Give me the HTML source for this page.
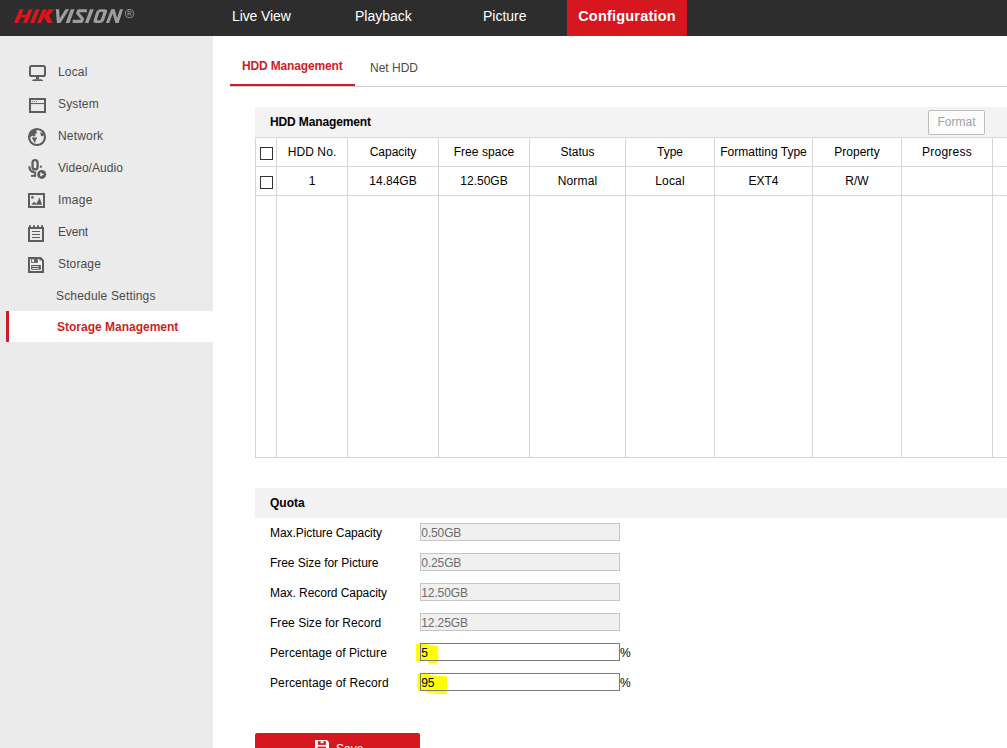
<!DOCTYPE html>
<html><head><meta charset="utf-8">
<style>
*{box-sizing:border-box;margin:0;padding:0}
html,body{width:1007px;height:748px;overflow:hidden;background:#fff;font-family:"Liberation Sans",sans-serif;font-size:12px;color:#000}
.abs{position:absolute}
#hdr{position:absolute;left:0;top:0;width:1007px;height:36px;background:#2d2d2d}
.nav{position:absolute;top:0;height:36px;line-height:32px;font-size:14px;color:#fff;white-space:nowrap}
#side{position:absolute;left:0;top:36px;width:213px;height:712px;background:#ebebeb}
.si{position:absolute;left:58px;font-size:12px;color:#4a4a4a;white-space:nowrap;line-height:14px}
.ico{position:absolute;left:27px}
.th,.td{position:absolute;text-align:center;font-size:12px;line-height:14px;white-space:nowrap}
.vl{position:absolute;width:1px;background:#d6d6d6;top:137px;height:321px}
.hl{position:absolute;height:1px;background:#d6d6d6;left:255px;width:752px}
.lbl{position:absolute;left:270px;font-size:12px;line-height:14px;white-space:nowrap}
.inp{position:absolute;left:420px;width:200px;height:18px;border:1px solid #c6c6c6;background:#f0f0f0;font-size:12px;line-height:18px;padding-left:0.3px;color:#6d6d6d;letter-spacing:-0.13px}
.inp.w{background:#fff;border:1px solid #7a7a7a;color:#000}
.cb{position:absolute;width:13px;height:13px;border:1px solid #333;background:#fff}
</style></head><body>
<div id="hdr">
<svg class="abs" style="left:0;top:0" width="140" height="36" viewBox="0 0 140 36">
<g transform="translate(10,4) scale(0.064558)" fill="#e0141c">
<polygon points="62,295 125,295 215,80 150,80"/>
<polygon points="200,295 265,295 352,80 290,80"/>
<polygon points="150,210 245,210 263,165 168,165"/>
<polygon points="310,295 372,295 460,80 398,80"/>
<polygon points="420,295 482,295 570,80 508,80"/>
<polygon points="512,205 600,80 690,80 565,222"/>
<polygon points="528,205 592,160 660,295 583,295"/>
</g>
<g transform="translate(52,4) scale(0.044687)" fill="#9e9e9e">
<polygon points="85,115 110,425 190,425 385,115 300,115 172,325 160,115"/>
<polygon points="305,425 390,425 505,115 420,115"/>
<polyline points="782,150 596,150 574,208 682,332 660,390 462,390" fill="none" stroke="#9e9e9e" stroke-width="70" stroke-linejoin="round"/>
<polygon points="735,425 815,425 935,115 850,115"/>
</g>
<g transform="translate(90,4) scale(0.044687)" fill="#9e9e9e">
<g transform="translate(57,425) skewX(-19)"><rect x="0" y="-310" width="238" height="310" rx="80" ry="70"/><rect x="72" y="-252" width="88" height="194" rx="34" ry="30" fill="#2d2d2d"/></g>
<polygon points="355,425 430,425 545,115 475,115"/>
<polygon points="475,115 550,115 640,425 570,425"/>
<polygon points="570,425 640,425 740,115 670,115"/>
<circle cx="885" cy="215" r="92" fill="none" stroke="#9e9e9e" stroke-width="20"/>
<path d="M852,270 L852,162 L895,162 Q922,162 922,190 Q922,216 895,216 L852,216 M893,216 L928,270" fill="none" stroke="#9e9e9e" stroke-width="17"/>
</g>
</svg>
<div class="nav" style="left:232px;letter-spacing:-0.1px">Live View</div>
<div class="nav" style="left:355px">Playback</div>
<div class="nav" style="left:483px">Picture</div>
<div class="nav" style="left:567px;width:120px;background:#d7171f;text-align:center;font-weight:bold;font-size:14.5px;letter-spacing:0.2px">Configuration</div>
</div>
<svg class="abs" style="left:0;top:0;z-index:2" width="60" height="310" viewBox="0 0 60 310" fill="none" stroke="none">
<g id="mon">
<rect x="30" y="66" width="15" height="10" rx="1.6" stroke="#5d5d5d" stroke-width="2"/>
<rect x="36" y="76.5" width="3" height="3" fill="#5d5d5d"/>
<polygon points="32,81 43.2,81 42.6,80 41.4,79.2 33.8,79.2 32.6,80" fill="#5d5d5d"/>
</g>
<g id="win">
<rect x="30" y="99" width="15" height="13" stroke="#5d5d5d" stroke-width="2"/>
<rect x="30" y="103" width="15" height="1.1" fill="#626262"/>
<circle cx="32.4" cy="101.5" r="0.6" fill="#5d5d5d"/><circle cx="34.4" cy="101.5" r="0.6" fill="#5d5d5d"/><circle cx="36.4" cy="101.5" r="0.6" fill="#5d5d5d"/>
</g>
<g id="globe">
<circle cx="37" cy="137" r="8" stroke="#5d5d5d" stroke-width="2.2"/>
<path d="M37.6,128.8 L36.4,131 L36.8,133.2 L34.6,134.8 L36,136 L33.2,136.6 L32.2,135.6 L30.6,137 L29,137.4 A8.2 8.2 0 0 1 37.6,128.8 Z" fill="#5d5d5d"/>
<path d="M31.6,137.6 L37.4,137.4 L35.9,140 L34.9,143.2 L33.4,140.4 Z" fill="#5d5d5d"/>
<path d="M40.4,132.2 L43.2,133.2 L43.8,135.6 L41.6,136.6 L40.6,134.8 Z" fill="#5d5d5d"/>
</g>
<g id="mic">
<rect x="32.55" y="160.1" width="5" height="9.3" rx="2.5" stroke="#5d5d5d" stroke-width="2.3"/>
<path d="M29.3,166.2 Q29.3,171.6 34.6,172.4" stroke="#5d5d5d" stroke-width="2.1"/>
<rect x="34.2" y="171.6" width="1.9" height="5.2" fill="#5d5d5d"/>
<rect x="31" y="174.9" width="4.8" height="1.9" fill="#5d5d5d"/>
<circle cx="40.9" cy="166.7" r="1.15" fill="#5d5d5d"/>
<circle cx="41.7" cy="174.4" r="4.5" fill="#5d5d5d"/>
<polygon points="40.2,172.2 40.2,176.6 44.1,174.4" fill="#ebebeb"/>
</g>
<g id="img">
<rect x="29" y="194" width="15" height="13" stroke="#5d5d5d" stroke-width="2"/>
<circle cx="32.4" cy="197.4" r="1.3" fill="#5d5d5d"/>
<polygon points="31.2,204.8 34,201.7 36.4,203.7 39.6,197.5 42,204.8" fill="#5d5d5d"/>
</g>
<g id="evt">
<rect x="29" y="228" width="14" height="13" stroke="#5d5d5d" stroke-width="2"/>
<rect x="29" y="225.2" width="1.9" height="2" fill="#5d5d5d"/><rect x="33" y="225.2" width="1.9" height="2" fill="#5d5d5d"/><rect x="37" y="225.2" width="1.9" height="2" fill="#5d5d5d"/><rect x="41.1" y="225.2" width="1.9" height="2" fill="#5d5d5d"/>
<rect x="32" y="231" width="8" height="1" fill="#5d5d5d"/><rect x="32" y="234" width="8" height="1" fill="#5d5d5d"/><rect x="32" y="237" width="8" height="1" fill="#5d5d5d"/>
</g>
<g id="flp">
<path d="M29,258 L40.6,258 L43,260.6 L43,272 L29,272 Z" stroke="#5d5d5d" stroke-width="2" fill="#f1f1f1"/>
<rect x="31.15" y="258.5" width="6.65" height="4.35" fill="#5d5d5d"/>
<rect x="32.1" y="259.3" width="2" height="2.6" fill="#f6f6f6"/>
<rect x="39.5" y="259" width="1.4" height="1.7" fill="#6a6a6a"/>
<rect x="31.15" y="265" width="9.7" height="4.8" fill="#5d5d5d"/>
<rect x="32.1" y="266.2" width="6.8" height="0.8" fill="#f6f6f6"/>
<rect x="32.1" y="268.1" width="6.8" height="0.8" fill="#f6f6f6"/>
</g>
</svg>
<div id="side">
<div class="si" style="top:29px;letter-spacing:0.16px">Local</div>
<div class="si" style="top:61px;letter-spacing:0.13px">System</div>
<div class="si" style="top:93px;letter-spacing:0.18px">Network</div>
<div class="si" style="top:125px;letter-spacing:0.03px">Video/Audio</div>
<div class="si" style="top:157px;letter-spacing:0.26px">Image</div>
<div class="si" style="top:189px;letter-spacing:-0.14px">Event</div>
<div class="si" style="top:221px;letter-spacing:0.13px">Storage</div>
<div class="si" style="top:253px;left:56px;letter-spacing:0.17px">Schedule Settings</div>
<div class="abs" style="left:6px;top:275px;width:207px;height:31px;background:#fff;border-left:3px solid #cb1f27"></div>
<div class="si" style="top:284px;left:57px;color:#cb1f27;font-weight:bold">Storage Management</div>
</div>
<!-- tabs -->
<div class="abs" style="left:230px;top:86px;width:777px;height:1px;background:#d0d0d0"></div>
<div class="abs" style="left:230px;top:84px;width:125px;height:2px;background:#cb1f27"></div>
<div class="abs" style="left:242px;top:59px;font-size:12px;font-weight:bold;color:#cb1f27;line-height:14px;letter-spacing:-0.15px">HDD Management</div>
<div class="abs" style="left:370px;top:61px;font-size:12px;color:#4a4a4a;line-height:14px">Net HDD</div>
<!-- panel -->
<div class="abs" style="left:255px;top:107px;width:752px;height:30px;background:#f3f3f3"></div>
<div class="abs" style="left:270px;top:115px;font-size:12px;font-weight:bold;line-height:14px;letter-spacing:-0.13px">HDD Management</div>
<div class="abs" style="left:928px;top:110px;width:57px;height:25px;border:1px solid #bcbcbc;border-radius:2px;background:#fcfcfc;color:#a3a3a3;font-size:12px;line-height:22px;text-align:center">Format</div>
<div class="hl" style="top:137px"></div>
<div class="hl" style="top:166px"></div>
<div class="hl" style="top:195px"></div>
<div class="hl" style="top:457px"></div>
<div class="vl" style="left:255px"></div>
<div class="vl" style="left:276px"></div>
<div class="vl" style="left:347px"></div>
<div class="vl" style="left:438px"></div>
<div class="vl" style="left:529px"></div>
<div class="vl" style="left:625px"></div>
<div class="vl" style="left:714px"></div>
<div class="vl" style="left:812px"></div>
<div class="vl" style="left:901px"></div>
<div class="vl" style="left:992px"></div>
<div class="cb" style="left:260px;top:147px"></div>
<div class="cb" style="left:260px;top:176px"></div>
<div class="th" style="left:277px;width:70px;top:145px;letter-spacing:0.1px">HDD No.</div>
<div class="th" style="left:348px;width:90px;top:145px">Capacity</div>
<div class="th" style="left:439px;width:90px;top:145px;letter-spacing:0.07px">Free space</div>
<div class="th" style="left:530px;width:95px;top:145px">Status</div>
<div class="th" style="left:626px;width:88px;top:145px">Type</div>
<div class="th" style="left:715px;width:97px;top:145px">Formatting Type</div>
<div class="th" style="left:813px;width:88px;top:145px">Property</div>
<div class="th" style="left:902px;width:90px;top:145px;letter-spacing:0.25px">Progress</div>
<div class="td" style="left:277px;width:70px;top:174px">1</div>
<div class="td" style="left:348px;width:90px;top:174px">14.84GB</div>
<div class="td" style="left:439px;width:90px;top:174px">12.50GB</div>
<div class="td" style="left:530px;width:95px;top:174px;letter-spacing:0.15px">Normal</div>
<div class="td" style="left:626px;width:88px;top:174px;letter-spacing:0.2px">Local</div>
<div class="td" style="left:715px;width:97px;top:174px">EXT4</div>
<div class="td" style="left:813px;width:88px;top:174px">R/W</div>
<!-- quota -->
<div class="abs" style="left:255px;top:488px;width:752px;height:30px;background:#f2f2f2"></div>
<div class="abs" style="left:270px;top:496px;font-size:12px;font-weight:bold;line-height:14px">Quota</div>
<div class="lbl" style="top:526px;letter-spacing:-0.075px">Max.Picture Capacity</div>
<div class="lbl" style="top:556px;letter-spacing:-0.05px">Free Size for Picture</div>
<div class="lbl" style="top:586px;letter-spacing:-0.05px">Max. Record Capacity</div>
<div class="lbl" style="top:616px;letter-spacing:0.025px">Free Size for Record</div>
<div class="lbl" style="top:646px;letter-spacing:0.07px">Percentage of Picture</div>
<div class="lbl" style="top:676px;letter-spacing:0.1px">Percentage of Record</div>
<div class="inp" style="top:523px">0.50GB</div>
<div class="inp" style="top:553px">0.25GB</div>
<div class="inp" style="top:583px">12.50GB</div>
<div class="inp" style="top:613px">12.25GB</div>
<svg class="abs" style="left:410px;top:635px" width="90" height="65" viewBox="0 0 1007 727"><polygon fill="#ffff00" points="68,100 180,100 255,118 315,122 315,295 300,312 205,312 200,292 68,290"/><polygon fill="#ffff00" points="80,437 180,437 290,455 400,460 415,470 415,660 280,660 275,645 185,645 180,628 95,625 80,610"/></svg>
<div class="inp w" style="top:643px;background:transparent">5</div>
<div class="inp w" style="top:673px;background:transparent">95</div>
<div class="lbl" style="left:620px;top:646px">%</div>
<div class="lbl" style="left:620px;top:676px">%</div>
<div class="abs" style="left:255px;top:733px;width:165px;height:30px;background:#d7171f;border-radius:2px;color:#fff;font-size:12px;line-height:32px;padding-left:81px">Save</div>
<svg class="abs" style="left:310px;top:736px" width="24" height="12" viewBox="310 736 24 12"><path d="M315,740.1 L327,740.1 L329,742.4 L329,754 L315,754 Z" fill="#fff"/><rect x="317.9" y="741.2" width="8" height="3.7" fill="#d7171f"/><rect x="320.6" y="741.2" width="2.9" height="2" fill="#fff"/><rect x="317.6" y="746.6" width="8.4" height="6" fill="#d7171f"/></svg>
</body></html>
